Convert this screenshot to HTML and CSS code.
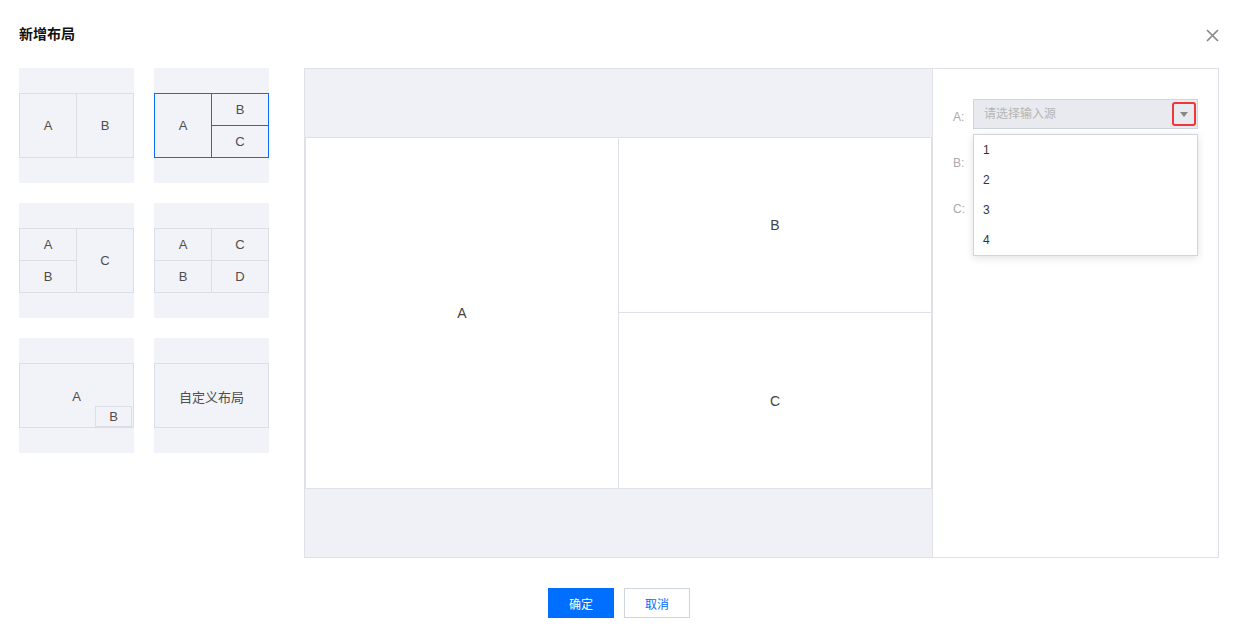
FILE: index.html
```html
<!DOCTYPE html>
<html lang="zh">
<head>
<meta charset="utf-8">
<title>新增布局</title>
<link rel="stylesheet" href="styles.css">
</head>
<body>
<div class="dialog">
  <div class="header">
    <h2 class="title">新增布局</h2>
    <button class="close" aria-label="关闭">
      <svg width="13" height="13" viewBox="0 0 13 13"><path d="M1 1L12 12M12 1L1 12" stroke="#888" stroke-width="1.7" fill="none"/></svg>
    </button>
  </div>
  <div class="body">
    <div class="layouts">
      <div class="thumb">
        <div class="frame f-two">
          <div class="cell">A</div><div class="cell">B</div>
        </div>
      </div>
      <div class="thumb">
        <div class="frame f-three active">
          <div class="cell span-rows">A</div><div class="cell">B</div><div class="cell">C</div>
        </div>
      </div>
      <div class="thumb">
        <div class="frame f-three-r">
          <div class="cell">A</div><div class="cell">B</div><div class="cell span-rows">C</div>
        </div>
      </div>
      <div class="thumb">
        <div class="frame f-four">
          <div class="cell">A</div><div class="cell">B</div><div class="cell">C</div><div class="cell">D</div>
        </div>
      </div>
      <div class="thumb">
        <div class="frame f-pip">
          <div class="cell">A</div>
          <div class="pip">B</div>
        </div>
      </div>
      <div class="thumb">
        <div class="frame f-one">
          <div class="cell">自定义布局</div>
        </div>
      </div>
    </div>

    <div class="preview">
      <div class="stage">
        <div class="pcell span-rows">A</div>
        <div class="pcell">B</div>
        <div class="pcell">C</div>
      </div>
    </div>

    <div class="config">
      <div class="row">
        <span class="label">A:</span>
        <div class="select">
          <span class="placeholder">请选择输入源</span>
          <span class="arrow"><span class="tri"></span></span>
        </div>
      </div>
      <div class="row">
        <span class="label">B:</span>
        <div class="select"></div>
      </div>
      <div class="row">
        <span class="label">C:</span>
        <div class="select"></div>
      </div>
      <ul class="menu">
        <li>1</li>
        <li>2</li>
        <li>3</li>
        <li>4</li>
      </ul>
    </div>
  </div>
  <div class="footer">
    <button class="btn btn-primary">确定</button>
    <button class="btn">取消</button>
  </div>
</div>
</body>
</html>
```

FILE: styles.css
```css
* { box-sizing: border-box; }
html, body {
  margin: 0;
  padding: 0;
  background: #fff;
}
body {
  font-family: "Liberation Sans", "Noto Sans CJK SC", sans-serif;
  font-size: 12px;
  color: #333;
}
.dialog {
  width: 1240px;
  padding: 24px 21px 0 19px;
}
.header {
  display: flex;
  justify-content: space-between;
  align-items: flex-start;
  height: 20px;
}
.title {
  margin: 0;
  font-size: 14px;
  line-height: 20px;
  font-weight: bold;
  color: #111;
}
.close {
  border: 0;
  background: none;
  padding: 0;
  margin-top: 5px;
  width: 13px;
  height: 13px;
  display: block;
  cursor: pointer;
}
.close svg { display: block; }

.body {
  display: flex;
  margin-top: 24px;
  height: 490px;
}
.layouts {
  display: grid;
  grid-template-columns: 115px 115px;
  grid-auto-rows: 115px;
  gap: 20px;
  align-content: start;
  margin-right: 35px;
}
.thumb {
  background: #f2f3f8;
  padding-top: 25px;
}
.frame {
  height: 65px;
  display: grid;
  gap: 1px;
  background: #dcdee6;
  border: 1px solid #dcdee6;
  position: relative;
}
.frame.active {
  background: #0a6cff;
  border-color: #0a6cff;
}
.cell {
  background: #f2f3f8;
  display: flex;
  align-items: center;
  justify-content: center;
  font-size: 13px;
  color: #4d4d4d;
}
.f-two { grid-template-columns: 1fr 1fr; }
.f-three { grid-template-columns: 1fr 1fr; grid-template-rows: 1fr 1fr; }
.f-three .span-rows { grid-row: 1 / 3; }
.f-three-r { grid-template-columns: 1fr 1fr; grid-template-rows: 1fr 1fr; grid-auto-flow: column; }
.f-three-r .span-rows { grid-row: 1 / 3; }
.f-four { grid-template-columns: 1fr 1fr; grid-template-rows: 1fr 1fr; grid-auto-flow: column; }
.f-pip { grid-template-columns: 1fr; }
.f-pip .cell { padding-top: 2px; }
.f-one { grid-template-columns: 1fr; }
.f-one .cell { padding-top: 1px; }
.pip {
  position: absolute;
  right: 1px;
  bottom: 0;
  width: 37px;
  height: 21px;
  border: 1px solid #dcdee6;
  background: #f2f3f8;
  display: flex;
  align-items: center;
  justify-content: center;
  font-size: 13px;
  color: #4d4d4d;
}

.preview {
  width: 629px;
  height: 490px;
  border: 1px solid #dfe0e8;
  background: #f0f1f7;
  padding-top: 68px;
}
.stage {
  height: 352px;
  border: 1px solid #dfe0e8;
  background: #dfe0e8;
  display: grid;
  grid-template-columns: 312px 312px;
  grid-template-rows: 174px 175px;
  gap: 1px;
  grid-auto-flow: column;
}
.pcell {
  background: #fff;
  display: flex;
  align-items: center;
  justify-content: center;
  font-size: 14px;
  color: #444;
}
.stage .span-rows { grid-row: 1 / 3; }

.config {
  position: relative;
  width: 286px;
  height: 490px;
  border: 1px solid #dfe0e8;
  border-left: 0;
  padding: 30px 0 0 20px;
}
.row {
  display: flex;
  align-items: flex-start;
  height: 30px;
  margin-bottom: 16px;
}
.label {
  width: 20px;
  line-height: 30px;
  padding-top: 3px;
  color: #aaa;
  font-size: 12px;
}
.select {
  position: relative;
  width: 225px;
  height: 30px;
  border: 1px solid #cfd4dd;
  background: #e8eaef;
  padding-left: 10px;
  line-height: 28px;
}
.placeholder {
  color: #b5b5b5;
  font-size: 12px;
}
.arrow {
  position: absolute;
  right: 1px;
  top: 2px;
  width: 24px;
  height: 24px;
  border: 2px solid #f0353b;
  border-radius: 3px;
  display: flex;
  align-items: center;
  justify-content: center;
}
.tri {
  width: 0;
  height: 0;
  border-left: 4px solid transparent;
  border-right: 4px solid transparent;
  border-top: 5px solid #888;
  margin-top: 1px;
}
.menu {
  position: absolute;
  left: 40px;
  top: 65px;
  width: 225px;
  margin: 0;
  padding: 0;
  list-style: none;
  background: #fff;
  border: 1px solid #cfd4dd;
  box-shadow: 0 2px 8px rgba(0, 0, 0, 0.12);
}
.menu li {
  height: 30px;
  line-height: 30px;
  padding-left: 9px;
  color: #333;
  font-size: 12px;
}

.footer {
  display: flex;
  justify-content: center;
  gap: 10px;
  margin-top: 30px;
}
.btn {
  width: 66px;
  height: 30px;
  border: 1px solid #cfd5de;
  background: #fff;
  color: #006eff;
  font-family: "Liberation Sans", "Noto Sans CJK SC", sans-serif;
  font-size: 12px;
  padding: 0;
  cursor: pointer;
}
.btn-primary {
  background: #006eff;
  border-color: #006eff;
  color: #fff;
}
```
